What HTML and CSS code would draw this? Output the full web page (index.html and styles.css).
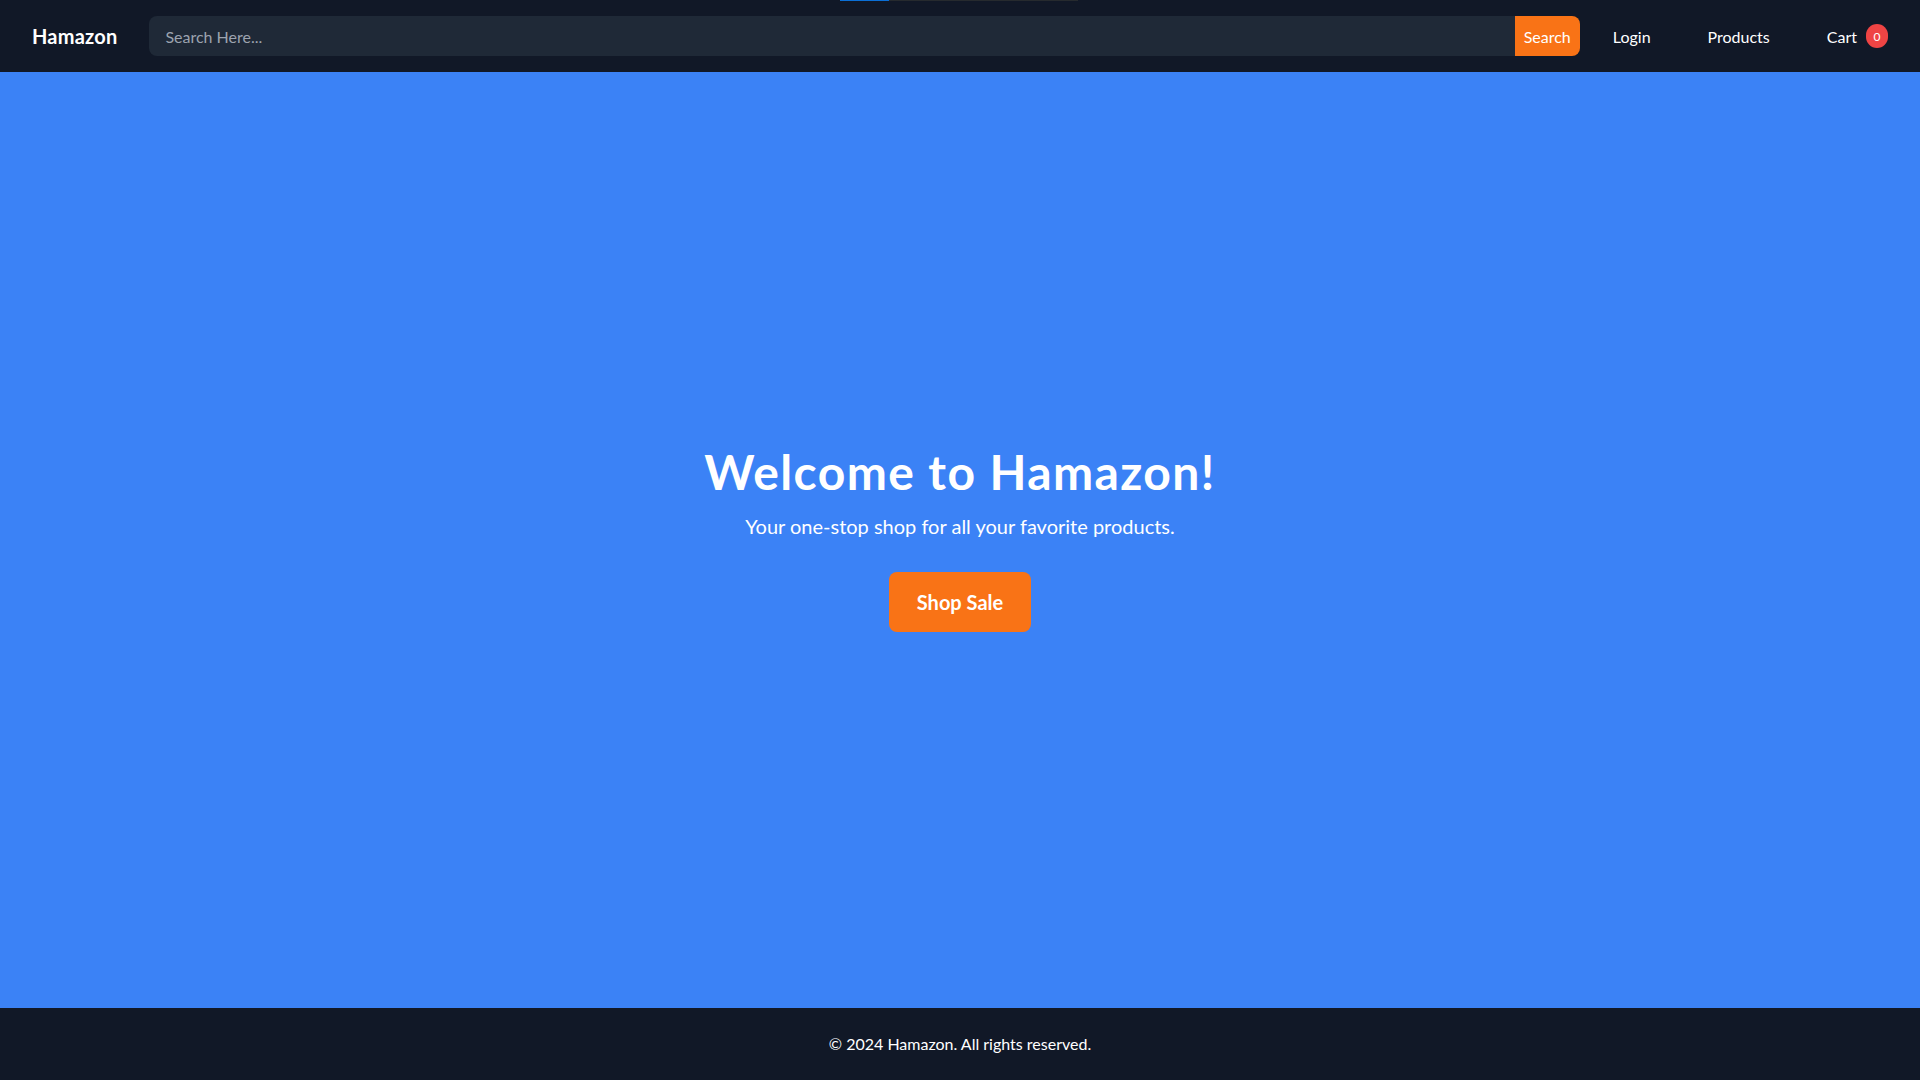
FILE: index.html
```html
<!DOCTYPE html>
<html lang="en">
<head>
<meta charset="utf-8">
<title>Hamazon</title>
<link rel="stylesheet" href="styles.css">
</head>
<body>
<div class="page">
  <div class="loadbar"><span class="loadbar-fill"></span><span class="loadbar-track"></span></div>
  <nav class="nav">
    <a class="brand" href="#">Hamazon</a>
    <form class="search">
      <input class="search-input" type="text" placeholder="Search Here...">
      <button class="search-btn" type="button">Search</button>
    </form>
    <ul class="links">
      <li><a href="#">Login</a></li>
      <li><a href="#">Products</a></li>
      <li><a href="#" class="cart">Cart <span class="badge">0</span></a></li>
    </ul>
  </nav>
  <main class="hero">
    <h1 class="hero-title">Welcome to Hamazon!</h1>
    <p class="hero-sub">Your one-stop shop for all your favorite products.</p>
    <a class="hero-btn" href="#">Shop Sale</a>
  </main>
  <footer class="footer">
    <p>&copy; 2024 Hamazon. All rights reserved.</p>
  </footer>
</div>
</body>
</html>
```

FILE: styles.css
```css
* { box-sizing: border-box; }
html, body { margin: 0; padding: 0; }
body {
  font-family: "Lato", "Noto Sans", sans-serif;
  color: #fff;
  background: #111827;
}
a { color: inherit; text-decoration: none; }
.page {
  min-height: 100vh;
  display: flex;
  flex-direction: column;
  position: relative;
}
.loadbar {
  position: absolute;
  top: 0;
  left: 840px;
  display: flex;
  height: 1px;
}
.loadbar-fill { width: 49px; background: #0b6fd6; }
.loadbar-track { width: 189px; background: #262a2e; }

.nav {
  height: 72px;
  background: #111827;
  display: flex;
  align-items: center;
  padding: 0 32px;
}
.brand {
  font-size: 20px;
  font-weight: 700;
  line-height: 28px;
  letter-spacing: 0.2px;
}
.search {
  flex: 1;
  display: flex;
  margin: 0 33px 0 32px;
  height: 40px;
}
.search-input {
  flex: 1;
  border: none;
  outline: none;
  background: #1f2937;
  color: #fff;
  border-radius: 8px 0 0 8px;
  padding: 0 16px;
  font-family: inherit;
  font-size: 16px;
}
.search-input::placeholder { color: #9ca3af; }
.search-btn {
  border: none;
  background: #f97316;
  color: #fff;
  font-family: inherit;
  font-size: 16px;
  padding: 0 9px;
  border-radius: 0 8px 8px 0;
}
.links {
  list-style: none;
  margin: 0;
  padding: 0;
  display: flex;
  align-items: center;
  gap: 57px;
  font-size: 16px;
}
.cart { display: flex; align-items: center; }
.badge {
  margin-left: 9px;
  width: 22px;
  height: 24px;
  border-radius: 12px;
  background: #ef4444;
  font-size: 12px;
  display: inline-flex;
  align-items: center;
  justify-content: center;
}
.hero {
  flex: 1;
  background: #3b82f6;
  display: flex;
  flex-direction: column;
  align-items: center;
  justify-content: center;
  text-align: center;
}
.hero-title {
  margin: 0 0 16px;
  font-size: 48px;
  line-height: 48px;
  font-weight: 700;
  letter-spacing: 1.4px;
}
.hero-sub {
  margin: 0 0 32px;
  font-size: 20px;
  line-height: 28px;
}
.hero-btn {
  background: #f97316;
  border-radius: 8px;
  padding: 16px 28px;
  font-size: 20px;
  line-height: 28px;
  font-weight: 700;
}
.footer {
  background: #111827;
  padding: 24px 0;
  text-align: center;
}
.footer p { margin: 0; font-size: 16px; line-height: 24px; }
```
